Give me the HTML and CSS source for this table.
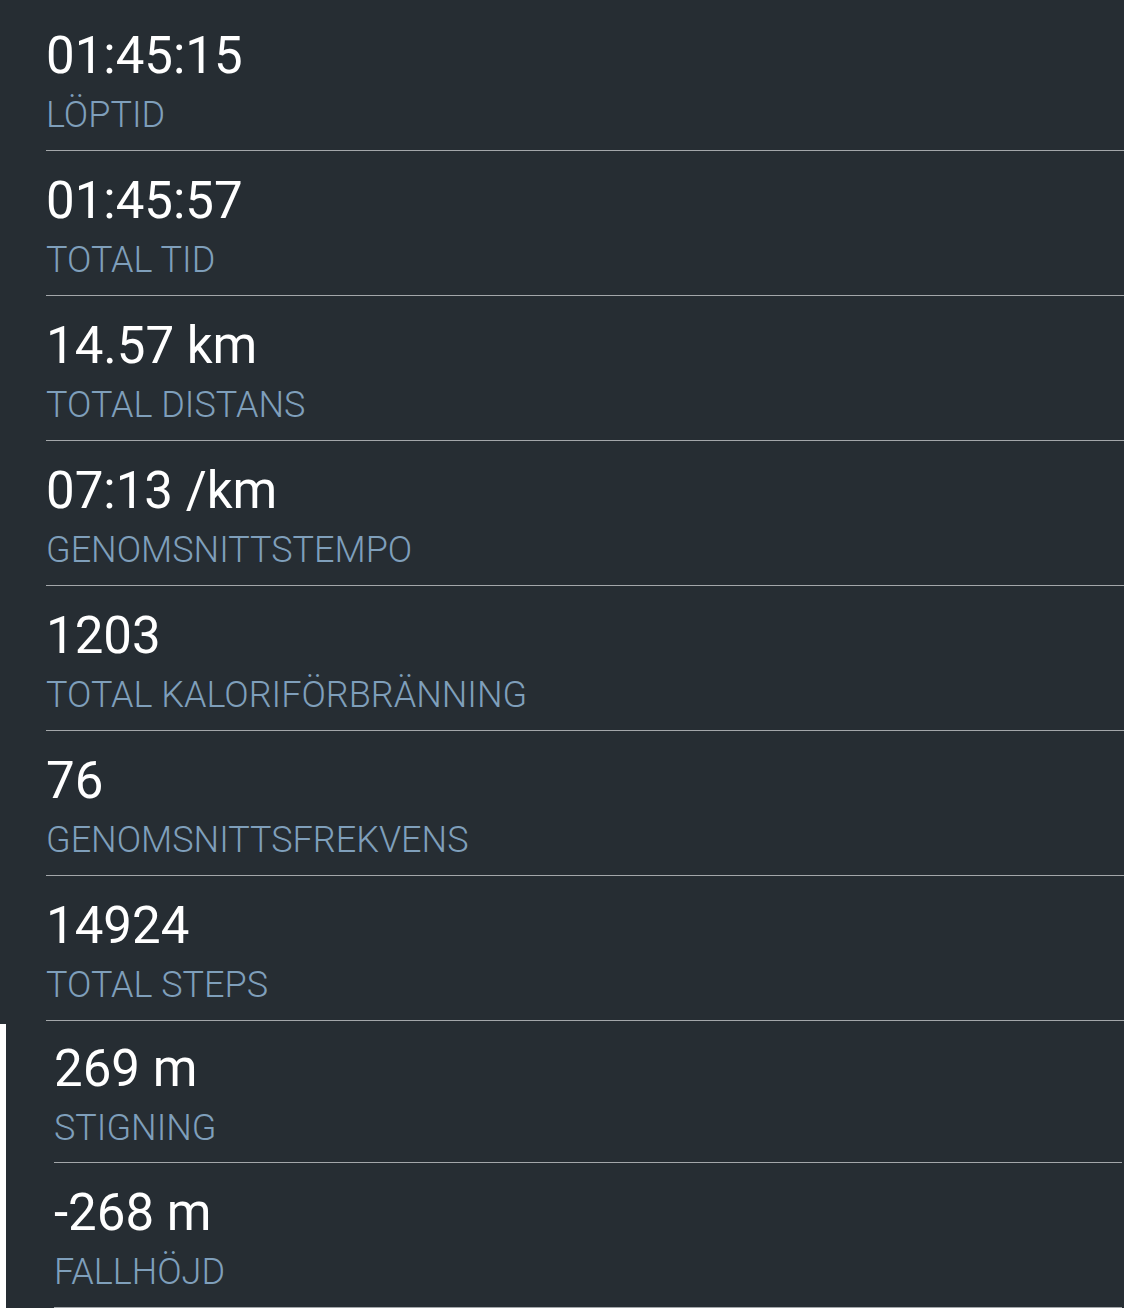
FILE: index.html
```html
<!DOCTYPE html>
<html lang="sv">
<head>
    <meta charset="UTF-8">
    <meta name="viewport" content="width=device-width, initial-scale=1.0">
    <title>Sammanfattning</title>
    <link rel="stylesheet" href="styles.css">
</head>
<body>
    <div class="stats">
        <div class="stat">
            <div class="value">01:45:15</div>
            <div class="label">LÖPTID</div>
        </div>
        <div class="stat">
            <div class="value">01:45:57</div>
            <div class="label">TOTAL TID</div>
        </div>
        <div class="stat">
            <div class="value">14.57 km</div>
            <div class="label">TOTAL DISTANS</div>
        </div>
        <div class="stat">
            <div class="value">07:13 /km</div>
            <div class="label">GENOMSNITTSTEMPO</div>
        </div>
        <div class="stat">
            <div class="value">1203</div>
            <div class="label">TOTAL KALORIFÖRBRÄNNING</div>
        </div>
        <div class="stat">
            <div class="value">76</div>
            <div class="label">GENOMSNITTSFREKVENS</div>
        </div>
        <div class="stat">
            <div class="value">14924</div>
            <div class="label">TOTAL STEPS</div>
        </div>
    </div>
    <div class="stats-lower">
        <div class="stats-inner">
            <div class="stat first">
                <div class="value">269 m</div>
                <div class="label">STIGNING</div>
            </div>
            <div class="stat">
                <div class="value">-268 m</div>
                <div class="label">FALLHÖJD</div>
            </div>
        </div>
    </div>
</body>
</html>
```

FILE: styles.css
```css
body {
    margin: 0;
    background-color: #fff;
    font-family: Roboto, 'Liberation Sans', sans-serif;
}
.stats {
    background-color: #262d33;
    padding: 6px 0 0 46px;
}
.stat {
    padding: 21px 0 15px;
    border-bottom: 1px solid #a3a7aa;
}
.value {
    color: #fff;
    font-size: 51px;
    line-height: 58px;
    margin-bottom: 10px;
}
.label {
    color: #7f9fbb;
    font-size: 36px;
    font-weight: 300;
    line-height: 40px;
}
.stats-lower {
    background-color: #262d33;
    padding-top: 3px;
}
.stats-inner {
    border-left: 6px solid #fff;
    padding-left: 48px;
    margin-right: 2px;
}
.stats-inner .stat.first {
    padding-top: 16px;
    padding-bottom: 14px;
}
```
